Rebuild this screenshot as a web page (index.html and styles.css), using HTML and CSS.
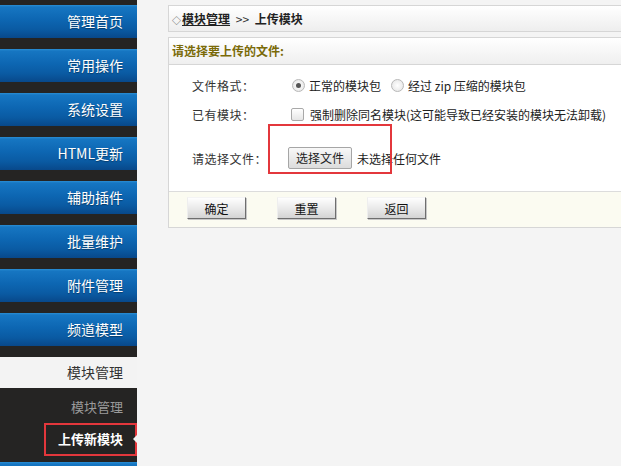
FILE: index.html
```html
<!DOCTYPE html>
<html lang="zh-CN">
<head>
<meta charset="utf-8">
<title>上传模块</title>
<link rel="stylesheet" href="styles.css">
</head>
<body>
<div class="layout">
  <aside class="sidebar">
    <ul class="menu">
      <li class="menu-item">管理首页</li>
      <li class="menu-item">常用操作</li>
      <li class="menu-item">系统设置</li>
      <li class="menu-item">HTML更新</li>
      <li class="menu-item">辅助插件</li>
      <li class="menu-item">批量维护</li>
      <li class="menu-item">附件管理</li>
      <li class="menu-item">频道模型</li>
      <li class="menu-open">模块管理</li>
      <li class="sub-list">
        <div class="sub-item">模块管理</div>
        <div class="sub-item active">上传新模块<span class="annot"></span><span class="pointer"></span></div>
      </li>
      <li class="menu-item"></li>
    </ul>
  </aside>
  <main class="main">
    <div class="crumb"><span class="dia">◇</span><a class="crumb-link">模块管理</a> <span class="sep">&gt;&gt;</span> <b>上传模块</b></div>
    <div class="panel">
      <div class="panel-head">请选择要上传的文件:</div>
      <div class="panel-body">
        <div class="row">
          <div class="label">文件格式：</div>
          <div class="ctrl">
            <span class="radio checked"></span><span class="opt">正常的模块包</span>
            <span class="radio"></span><span class="opt">经过 zip 压缩的模块包</span>
          </div>
        </div>
        <div class="row gap-lg">
          <div class="label">已有模块：</div>
          <div class="ctrl">
            <span class="check"></span><span class="opt">强制删除同名模块(这可能导致已经安装的模块无法卸载)</span>
          </div>
        </div>
        <div class="row">
          <div class="label">请选择文件：</div>
          <div class="ctrl file-ctrl">
            <span class="file-btn">选择文件</span><span class="file-none">未选择任何文件</span>
            <span class="annot-box"></span>
          </div>
        </div>
      </div>
      <div class="panel-foot">
        <span class="btn">确定</span>
        <span class="btn">重置</span>
        <span class="btn">返回</span>
      </div>
    </div>
  </main>
</div>
</body>
</html>
```

FILE: styles.css
```css
* { box-sizing: border-box; }
html, body { margin: 0; padding: 0; }
body {
  width: 621px;
  height: 466px;
  overflow: hidden;
  background: #f4f4f4;
  font-family: "Noto Sans CJK SC", "Liberation Sans", sans-serif;
  font-size: 12px;
  color: #222;
}
.layout { display: flex; height: 466px; }

/* sidebar */
.sidebar {
  width: 137px;
  flex: none;
  background: #252423;
  overflow: hidden;
}
.menu { list-style: none; margin: 0; padding: 5px 0 0; }
.menu-item {
  height: 33px;
  margin-bottom: 11px;
  padding-right: 14px;
  text-align: right;
  line-height: 33px;
  font-size: 14px;
  color: #fff;
  background: linear-gradient(#2a8ed4 0, #1676c2 2px, #0d66b2 45%, #0a5aa2 75%, #08488a 100%);
  text-shadow: 0 1px 1px rgba(0,0,0,0.35);
}
.menu-open {
  height: 31px;
  line-height: 31px;
  padding-right: 14px;
  text-align: right;
  font-size: 14px;
  color: #333;
  background: #f3f3f3;
}
.sub-list { padding: 4px 0 6px; }
.sub-item {
  position: relative;
  height: 30px;
  line-height: 30px;
  padding-right: 14px;
  text-align: right;
  font-size: 13px;
  color: #9a9a9a;
}
.sub-item.active {
  height: 33px;
  line-height: 32px;
  margin-top: 1px;
  color: #fff;
  font-weight: bold;
}
.annot {
  position: absolute;
  left: 44px;
  right: 0;
  top: 0;
  bottom: 0;
  border: 2px solid #e3373c;
}
.pointer {
  position: absolute;
  right: 0;
  top: 12px;
  width: 0;
  height: 0;
  border-top: 4px solid transparent;
  border-bottom: 4px solid transparent;
  border-right: 4px solid #f4f4f4;
}

/* main */
.main {
  flex: 1;
  min-width: 0;
  padding: 5px 0 0 31px;
  overflow: hidden;
}
.crumb {
  height: 27px;
  margin-right: -10px;
  border: 1px solid #d6d6d6;
  background: linear-gradient(#ffffff, #eeeeee);
  line-height: 25px;
  padding-left: 3px;
  color: #222;
}
.dia { font-size: 9px; color: #555; margin-right: 1px; }
.crumb-link { text-decoration: underline; font-weight: bold; color: #222; }
.sep { margin: 0 3px; color: #333; }
.crumb b { font-weight: bold; }

.panel {
  margin-top: 5px;
  margin-right: -10px;
  border: 1px solid #d6d6d6;
  background: #fff;
}
.panel-head {
  height: 27px;
  line-height: 26px;
  padding-left: 3px;
  border-bottom: 1px solid #d6d6d6;
  background: linear-gradient(#ffffff, #efefef);
  color: #7a6a08;
  font-weight: bold;
}
.panel-body { padding: 9px 0 22px 23px; }
.row {
  display: flex;
  align-items: center;
  height: 22px;
  margin-bottom: 7px;
}
.row.gap-lg { margin-bottom: 22px; }
.row:last-child { margin-bottom: 0; }
.label { width: 96px; flex: none; color: #333; letter-spacing: 0.5px; }
.ctrl { display: flex; align-items: center; color: #222; }
.radio {
  width: 13px; height: 13px;
  margin: 0 4px 0 4px;
  border: 1px solid #b8b8b8;
  border-radius: 50%;
  background: radial-gradient(#ffffff, #e2e2e2);
  position: relative;
}
.radio.checked::after {
  content: "";
  position: absolute;
  left: 3px; top: 3px;
  width: 5px; height: 5px;
  border-radius: 50%;
  background: #555;
}
.opt { margin-right: 6px; }
.check {
  width: 13px; height: 13px;
  margin: 0 6px 0 3px;
  border: 1px solid #a9a9a9;
  border-radius: 2px;
  background: linear-gradient(#ffffff, #e6e6e6);
}
.file-ctrl { position: relative; }
.file-btn {
  display: inline-block;
  height: 22px;
  line-height: 20px;
  padding: 0 7px;
  border: 1px solid #a6a6a6;
  border-radius: 2px;
  background: linear-gradient(#f8f8f8, #dcdcdc);
  color: #222;
  margin-right: 5px;
}
.file-none { color: #222; }
.annot-box {
  position: absolute;
  left: -20px;
  top: -23px;
  width: 124px;
  height: 50px;
  border: 2px solid #e3373c;
}

.panel-foot {
  height: 36px;
  border-top: 1px solid #dcdcdc;
  background: #fbfbf1;
  padding: 5px 0 0 18px;
  display: flex;
  gap: 31px;
}
.btn {
  display: inline-block;
  width: 59px;
  height: 22px;
  line-height: 21px;
  text-align: center;
  color: #111;
  background: linear-gradient(#fefefe, #e6e6e6 60%, #d4d4d4);
  border-top: 1px solid #f4f4f4;
  border-left: 1px solid #eeeeee;
  border-right: 1px solid #6e6e6e;
  border-bottom: 1px solid #6e6e6e;
  box-shadow: 1px 1px 0 #c8c8c8;
}
```
